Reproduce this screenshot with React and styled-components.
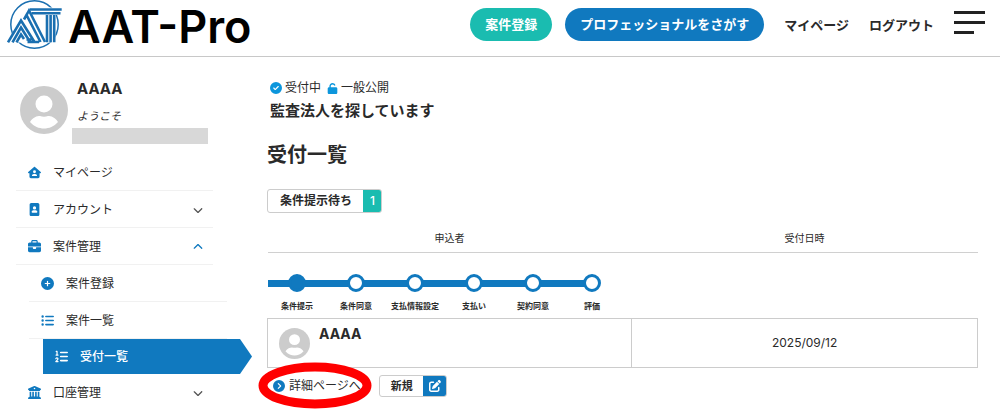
import React from 'react';
import styled, { createGlobalStyle } from 'styled-components';
import {
    FaHouseUser,
    FaImagePortrait,
    FaBriefcase,
    FaCirclePlus,
    FaListUl,
    FaListOl,
    FaBuildingColumns,
    FaCircleCheck,
    FaUnlock,
    FaCircleChevronRight,
    FaPenToSquare,
    FaChevronDown,
    FaChevronUp,
} from 'react-icons/fa6';

const BLUE = '#1079bf';
const GREEN = '#1abcb0';

const GlobalStyle = createGlobalStyle`
    *, *::before { box-sizing : border-box; }
    body {
        margin : 0;
        background : #fff;
        color : #2a2a2a;
        font-family : Inter, "Noto Sans CJK JP", sans-serif;
        font-size : 12px;
        line-height : 18px;
    }
    a { color : inherit; text-decoration : none; }
    ul, ol { list-style : none; margin : 0; padding : 0; }
    h1, h2, p { margin : 0; }
    button { font-family : inherit; color : inherit; cursor : pointer; }
`

const Header = styled.header`
    display : flex;
    align-items : flex-start;
    justify-content : space-between;
    height : 57px;
    padding : 0 15px 0 7px;
    border-bottom : 1px solid #c8c8c8;
`

const Logo = styled.a`
    display : flex;
    gap : 6px;
    color : #000;
    font-size : 45px;
    font-weight : 600;
    line-height : 54px;
`

const Nav = styled.nav`
    display : flex;
    align-items : center;
    gap : 20px;
    padding-top : 8px;
    font-size : 13px;
    font-weight : 700;
`

const Pills = styled.div`
    display : flex;
    gap : 13px;
`

const Pill = styled.a`
    padding : 0 15px;
    border-radius : 17px;
    background : ${({ $color }) => $color};
    color : #fff;
    line-height : 33px;
`

const Burger = styled.button`
    display : flex;
    flex-direction : column;
    gap : 7px;
    width : 31px;
    padding : 0 0 4px;
    border : 0;
    background : none;

    span {
        width : 100%;
        height : 3px;
        background : #222;
    }
    span:last-child { width : 20px; }
`

const Body = styled.div`
    display : flex;
    gap : 54px;
    padding-right : 22px;
`

const Sidebar = styled.aside`
    flex : none;
    width : 213px;
    padding : 20px 0 0 16px;
`

const Profile = styled.div`
    display : flex;
    gap : 4px;
    height : 77px;
    padding : 0 5px 0 4px;

    svg { margin-top : 9px; }
`

const ProfileText = styled.div`
    flex : 1;

    .name {
        padding-left : 5px;
        font-size : 15px;
        font-weight : 700;
        line-height : 24px;
    }
    .welcome {
        padding : 6px 0 3px 5px;
        font-size : 11px;
        font-style : italic;
    }
    .mask {
        height : 16px;
        background : #d8d8d8;
    }
`

const MenuItem = styled.li`
    margin-left : ${({ $depth }) => ($depth ? 13 : 0)}px;
    margin-right : ${({ $depth }) => ($depth ? -14 : 0)}px;
    border-bottom : 1px solid #f1f1f1;

    &:last-child { border-bottom : 0; }
`

const MenuLink = styled.a`
    display : flex;
    align-items : center;
    gap : 12px;
    height : 36px;
    padding : 1px 10px 0 12px;

    .icon { color : ${BLUE}; width : 13px; }
    .arrow { margin-left : auto; color : ${({ $open }) => ($open ? BLUE : '#555')}; }
`

const ActiveItem = styled.li`
    margin-left : 27px;
    margin-right : -39px;
    background : ${BLUE};
    clip-path : polygon(0 0, calc(100% - 12px) 0, 100% 50%, calc(100% - 12px) 100%, 0 100%);

    a {
        display : flex;
        align-items : center;
        gap : 12px;
        height : 35px;
        padding-left : 12px;
        color : #fff;
        font-weight : 500;
    }
    svg { width : 13px; }
`

const Main = styled.main`
    flex : 1;
    min-width : 0;
    padding-top : 22px;
`

const Status = styled.div`
    display : flex;
    gap : 6px;
    padding-left : 3px;

    span {
        display : flex;
        align-items : center;
        gap : 3px;
    }
    svg { color : #0c96dc; }
`

const JobTitle = styled.h1`
    padding-left : 3px;
    font-size : 15px;
    font-weight : 700;
    line-height : 27px;
`

const PageTitle = styled.h2`
    padding : 15px 0 18px;
    font-size : 20px;
    font-weight : 700;
    line-height : 32px;
`

const CountButton = styled.button`
    display : inline-flex;
    padding : 0;
    border : 1px solid #ccc;
    border-radius : 3px;
    background : #fff;
    font-size : ${({ $small }) => ($small ? 11 : 12)}px;
    font-weight : 700;
    line-height : ${({ $small }) => ($small ? 20 : 22)}px;
    overflow : hidden;

    .label { padding : 0 ${({ $small }) => ($small ? 11 : 12)}px; }
    .tail {
        display : flex;
        align-items : center;
        justify-content : center;
        width : ${({ $small }) => ($small ? 24 : 19)}px;
        margin : -1px;
        background : ${({ $color }) => $color};
        color : #fff;
        font-weight : 500;
    }
`

const Table = styled.table`
    width : 100%;
    margin-top : 12px;
    border-collapse : collapse;
    table-layout : fixed;

    th {
        height : 27px;
        padding : 0 0 1px;
        border-bottom : 1px solid #d0d0d0;
        font-size : 10px;
        font-weight : 400;
    }
    td { padding : 0; }
    td.cell {
        height : 49px;
        border : 1px solid #ccc;
    }
    td.date { text-align : center; }
`

const Steps = styled.ol`
    display : flex;
    padding-top : 21px;
    height : 65px;
`

const Step = styled.li`
    width : 59px;
    text-align : center;
    font-size : 8px;
    font-weight : 700;
    line-height : 12px;
    white-space : nowrap;
    background : linear-gradient(${BLUE}, ${BLUE}) 0 6px / ${({ $last }) => ($last ? '50%' : '100%')} 7px no-repeat;

    &::before {
        content : '';
        display : block;
        width : 18px;
        height : 18px;
        margin : 0 auto 8px;
        border : 3px solid ${BLUE};
        border-radius : 50%;
        background : ${({ $done }) => ($done ? BLUE : '#fff')};
    }
`

const Applicant = styled.div`
    display : flex;
    gap : 9px;
    height : 47px;
    padding : 9px 0 0 11px;
    font-size : 14px;
    font-weight : 700;

    span { margin-top : -3px; }
`

const Actions = styled.div`
    display : flex;
    align-items : center;
    gap : 18px;
    padding : 7px 0 0 6px;
`

const DetailLink = styled.a`
    position : relative;
    display : flex;
    align-items : center;
    gap : 4px;

    .icon { color : ${BLUE}; }
`

const Highlight = styled.svg`
    position : absolute;
    top : -15px;
    left : -15px;
    pointer-events : none;
`

const LogoMark = () => (
    <svg width="55" height="50" viewBox="0 0 55 50" fill="none" stroke="#1a6fb0">
        <circle cx="27.500" cy="24.500" r="23.700" strokeWidth="1.500" />
        <path fill="#fff" stroke="none" d="M0 42.500L13 20 21 7.500H55V15H48.500V42.500Z" />
        <path strokeWidth="2.500" d="M23 9.500H54.700M24.500 13.200H53.500" />
        <path strokeWidth="2.600" d="M40 15V42.300M43.600 15V42.300M47.200 15V42.300" />
        <path strokeWidth="2.600" d="M18.500 17L22 10.500 38 42M17 19.500L19.500 15 33.500 42M1 42.300L14 20.500 27.500 42M5.500 42.300L14 27.500 22.500 41M9.500 42.300L14 34.500 17 39M19.500 39.500H24.500M20.500 42H32" />
    </svg>
)

const Avatar = ({ size }) => (
    <svg width={size} height={size} viewBox="0 0 48 48">
        <circle cx="24" cy="24" r="24" fill="#ccc" />
        <circle cx="24" cy="18" r="8.500" fill="#fff" />
        <path fill="#fff" d="M10 36C13 31 17 30 20 30C22.500 31 25.500 31 28 30C31 30 35 31 38 36C34 40.500 29 42.500 24 42.500C19 42.500 14 40.500 10 36Z" />
    </svg>
)

const menus = [
    { label: 'マイページ', Icon: FaHouseUser },
    { label: 'アカウント', Icon: FaImagePortrait, arrow: 'down' },
    { label: '案件管理', Icon: FaBriefcase, arrow: 'up' },
    { label: '案件登録', Icon: FaCirclePlus, depth: 1 },
    { label: '案件一覧', Icon: FaListUl, depth: 1 },
    { label: '受付一覧', Icon: FaListOl, active: true },
    { label: '口座管理', Icon: FaBuildingColumns, arrow: 'down' },
];

const steps = ['条件提示', '条件同意', '支払情報設定', '支払い', '契約同意', '評価'];

const Menu = () => (
    <ul>
        {menus.map(({ label, Icon, arrow, depth, active }) => (
            active
            ? (
                <ActiveItem key={label}>
                    <a href="#" aria-current="page"><Icon size={13} />{label}</a>
                </ActiveItem>
            ) : (
                <MenuItem key={label} $depth={depth}>
                    <MenuLink href="#" $open={arrow === 'up'}>
                        <Icon className="icon" size={13} />
                        {label}
                        {arrow === 'down' && <FaChevronDown className="arrow" size={10} />}
                        {arrow === 'up' && <FaChevronUp className="arrow" size={10} />}
                    </MenuLink>
                </MenuItem>
            )
        ))}
    </ul>
)

const App = () => (
    <>
        <GlobalStyle />
        <Header>
            <Logo href="#"><LogoMark />AAT-Pro</Logo>
            <Nav>
                <Pills>
                    <Pill href="#" $color={GREEN}>案件登録</Pill>
                    <Pill href="#" $color={BLUE}>プロフェッショナルをさがす</Pill>
                </Pills>
                <a href="#">マイページ</a>
                <a href="#">ログアウト</a>
                <Burger aria-label="メニュー"><span /><span /><span /></Burger>
            </Nav>
        </Header>
        <Body>
            <Sidebar>
                <Profile>
                    <Avatar size={48} />
                    <ProfileText>
                        <p className="name">AAAA</p>
                        <p className="welcome">ようこそ</p>
                        <div className="mask" />
                    </ProfileText>
                </Profile>
                <Menu />
            </Sidebar>
            <Main>
                <Status>
                    <span><FaCircleCheck size={12} />受付中</span>
                    <span><FaUnlock size={11} />一般公開</span>
                </Status>
                <JobTitle>監査法人を探しています</JobTitle>
                <PageTitle>受付一覧</PageTitle>
                <CountButton $color={GREEN}>
                    <span className="label">条件提示待ち</span>
                    <span className="tail">1</span>
                </CountButton>
                <Table>
                    <colgroup>
                        <col width="51.3%" />
                        <col />
                    </colgroup>
                    <thead>
                        <tr><th>申込者</th><th>受付日時</th></tr>
                    </thead>
                    <tbody>
                        <tr>
                            <td colSpan={2}>
                                <Steps>
                                    {steps.map((name, i) => (
                                        <Step key={name} $done={i === 0} $last={i === steps.length - 1}>{name}</Step>
                                    ))}
                                </Steps>
                            </td>
                        </tr>
                        <tr>
                            <td className="cell">
                                <Applicant><Avatar size={31} /><span>AAAA</span></Applicant>
                            </td>
                            <td className="cell date">2025/09/12</td>
                        </tr>
                    </tbody>
                </Table>
                <Actions>
                    <DetailLink href="#">
                        <FaCircleChevronRight className="icon" size={12} />
                        詳細ページへ
                        <Highlight width="114" height="47" viewBox="0 0 114 47">
                            <ellipse cx="57" cy="23.500" rx="52" ry="18.500" fill="none" stroke="#f00" strokeWidth="9" />
                        </Highlight>
                    </DetailLink>
                    <CountButton $small $color={BLUE}>
                        <span className="label">新規</span>
                        <span className="tail"><FaPenToSquare size={12} /></span>
                    </CountButton>
                </Actions>
            </Main>
        </Body>
    </>
)

export default App;
